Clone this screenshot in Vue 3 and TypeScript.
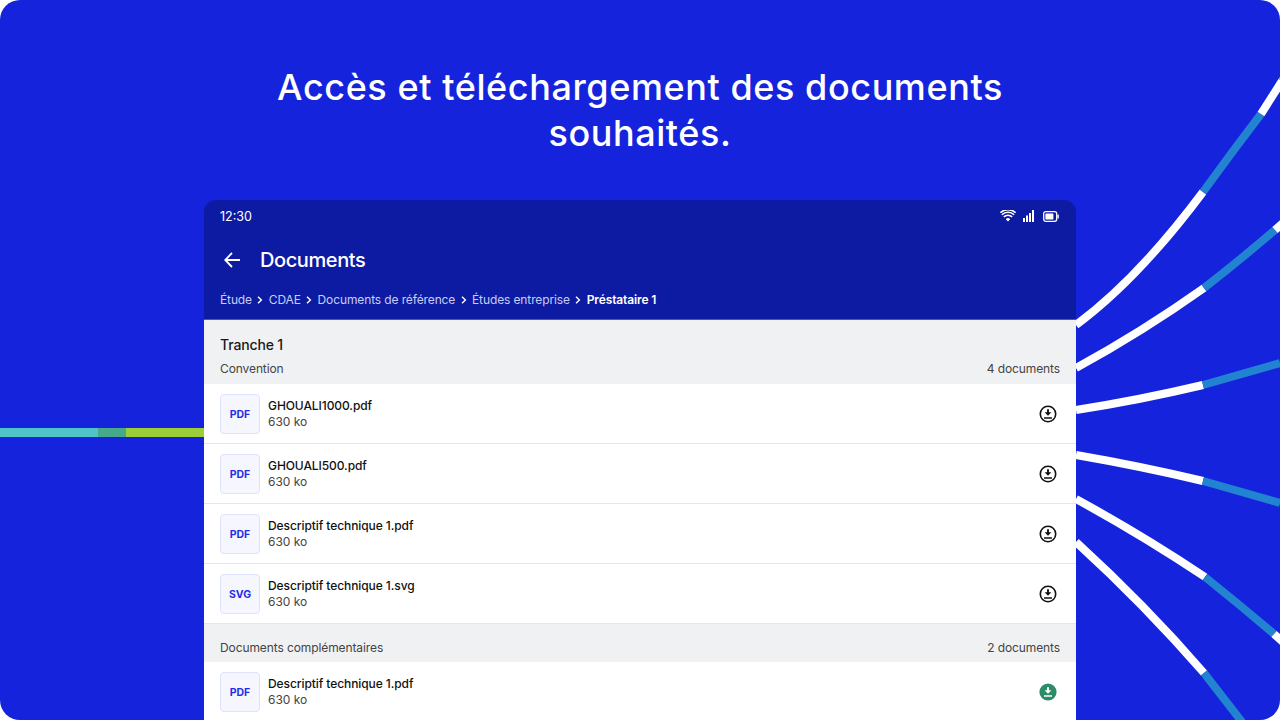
<template>
  <div class="stage">
    <svg class="rays" width="1280" height="720" viewBox="0 0 1280 720" aria-hidden="true">
      <rect x="0" y="428" width="98" height="9" fill="#4fc3c8" />
      <rect x="98" y="428" width="28" height="9" fill="#46a98a" />
      <rect x="126" y="428" width="78" height="9" fill="#9bcf38" />
      <g v-for="ray in rays" :key="ray.white" fill="none" stroke-width="8">
        <path :d="ray.white" stroke="#ffffff" />
        <path :d="ray.blue" stroke="#2283d0" />
        <path v-if="ray.tip" :d="ray.tip" stroke="#ffffff" />
      </g>
      <path d="M1282 81 1292 64" fill="none" stroke="#f5a623" stroke-width="8" />
    </svg>

    <h1 class="title">Accès et téléchargement des documents<br />souhaités.</h1>

    <section class="phone">
      <header class="appbar">
        <div class="status">
          <span>12:30</span>
          <div class="status-icons">
            <svg width="16" height="12" viewBox="0 0 16 12">
              <path d="M8 11.6 5.8 9.2a3.1 3.1 0 0 1 4.4 0Z" fill="#fff" />
              <path d="M3.8 6.9a5.9 5.9 0 0 1 8.4 0M1.9 4.7a8.6 8.6 0 0 1 12.2 0M.4 2.7a11 11 0 0 1 15.2 0" fill="none" stroke="#fff" stroke-width="1.5" />
            </svg>
            <svg width="11" height="12" viewBox="0 0 11 12" fill="#fff">
              <rect x="0" y="8" width="2" height="4" />
              <rect x="3" y="5.5" width="2" height="6.5" />
              <rect x="6" y="3" width="2" height="9" />
              <rect x="9" y="0" width="2" height="12" />
            </svg>
            <svg class="battery" width="16" height="11" viewBox="0 0 16 11">
              <rect x=".7" y=".7" width="13" height="9.6" rx="2" fill="none" stroke="#fff" stroke-width="1.3" />
              <rect x="2.4" y="2.4" width="8" height="6.2" rx=".6" fill="#fff" />
              <rect x="14.4" y="3.6" width="1.4" height="3.8" rx=".5" fill="#fff" />
            </svg>
          </div>
        </div>
        <div class="toolbar">
          <svg class="back" width="16" height="16" viewBox="0 0 16 16" fill="none" stroke="#fff" stroke-width="1.8">
            <path d="M16 8H1.5M8 1 1.2 8 8 15" />
          </svg>
          <h2>Documents</h2>
        </div>
        <nav class="crumbs">
          <template v-for="(crumb, i) in crumbs" :key="crumb">
            <svg v-if="i > 0" width="6" height="8" viewBox="0 0 6 8" fill="none" stroke="#fff" stroke-width="1.4">
              <path d="M1 .8 4.4 4 1 7.2" />
            </svg>
            <span :class="{ current: i === crumbs.length - 1 }">{{ crumb }}</span>
          </template>
        </nav>
      </header>

      <div v-for="(group, g) in groups" :key="group.label">
        <div class="group-head" :class="{ first: g === 0 }">
          <h3 v-if="group.heading">{{ group.heading }}</h3>
          <div class="group-meta">
            <span>{{ group.label }}</span>
            <span>{{ group.files.length + group.hidden }} documents</span>
          </div>
        </div>
        <div v-for="file in group.files" :key="file.name + file.ext" class="row">
          <div class="tile">{{ file.ext }}</div>
          <div class="info">
            <strong>{{ file.name }}</strong>
            <span>630 ko</span>
          </div>
          <svg v-if="file.done" width="18" height="18" viewBox="0 0 18 18">
            <circle cx="9" cy="9" r="8.6" fill="#2e8b68" />
            <path d="M9 4.2v3.8" fill="none" stroke="#fff" stroke-width="1.9" />
            <path d="M5.6 7.2h6.8L9 10.7Z" fill="#fff" />
            <path d="M5 13h8" fill="none" stroke="#fff" stroke-width="1.5" />
          </svg>
          <svg v-else width="18" height="18" viewBox="0 0 18 18">
            <circle cx="9" cy="9" r="7.7" fill="none" stroke="#111" stroke-width="1.6" />
            <path d="M9 4.2v3.8" fill="none" stroke="#111" stroke-width="1.9" />
            <path d="M5.6 7.2h6.8L9 10.7Z" fill="#111" />
            <path d="M5 13h8" fill="none" stroke="#111" stroke-width="1.5" />
          </svg>
        </div>
      </div>
    </section>
  </div>
</template>

<script setup lang="ts">
interface DocFile {
  name: string;
  ext: string;
  done?: boolean;
}

const crumbs = ['Étude', 'CDAE', 'Documents de référence', 'Études entreprise', 'Préstataire 1'];

const rays = [
  { white: 'M1076 325Q1138 279 1203 192', blue: 'M1203 192Q1232 152 1261 114', tip: 'M1261 114L1282 81' },
  { white: 'M1076 368Q1142 332 1204 288', blue: 'M1204 288Q1240 260 1275 230', tip: 'M1275 230L1284 222' },
  { white: 'M1076 410Q1140 400 1203 385', blue: 'M1203 385L1280 363' },
  { white: 'M1076 455Q1140 466 1203 481', blue: 'M1203 481L1280 503' },
  { white: 'M1076 499Q1142 535 1205 577', blue: 'M1205 577Q1240 605 1274 634', tip: 'M1274 634L1284 643' },
  { white: 'M1076 542Q1145 605 1204 673', blue: 'M1204 673L1242 722' },
];

const groups: { heading?: string; label: string; hidden: number; files: DocFile[] }[] = [
  {
    heading: 'Tranche 1',
    label: 'Convention',
    hidden: 0,
    files: [
      { name: 'GHOUALI1000.pdf', ext: 'PDF' },
      { name: 'GHOUALI500.pdf', ext: 'PDF' },
      { name: 'Descriptif technique 1.pdf', ext: 'PDF' },
      { name: 'Descriptif technique 1.svg', ext: 'SVG' },
    ],
  },
  {
    label: 'Documents complémentaires',
    hidden: 1,
    files: [{ name: 'Descriptif technique 1.pdf', ext: 'PDF', done: true }],
  },
];
</script>

<style>
html,
body {
  background: #ffffff;
}
</style>

<style scoped>
.stage {
  position: relative;
  width: 1280px;
  height: 720px;
  overflow: hidden;
  border-radius: 20px;
  background: #1524dc;
  font-family: Inter, "Liberation Sans", sans-serif;
  display: flex;
  flex-direction: column;
  align-items: center;
}

.rays {
  position: absolute;
  top: 0;
  left: 0;
}

.title {
  margin: 64px 0 44px;
  color: #ffffff;
  font-size: 36px;
  line-height: 46px;
  font-weight: 500;
  letter-spacing: 0.58px;
  text-align: center;
}

.phone {
  position: relative;
  flex: none;
  width: 872px;
  border-radius: 12px 12px 0 0;
  overflow: hidden;
}

.appbar {
  background: #0d1ba3;
  border-bottom: 1px solid #4452dc;
  color: #ffffff;
  height: 120px;
  box-sizing: border-box;
}

.status {
  height: 32px;
  padding: 0 17px 0 16px;
  display: flex;
  align-items: center;
  justify-content: space-between;
  font-size: 12.5px;
}

.status-icons {
  display: flex;
  align-items: center;
  gap: 7px;
}

.battery {
  margin-left: 2px;
}

.toolbar {
  height: 56px;
  padding: 0 20px;
  display: flex;
  align-items: center;
  gap: 20px;
}

.toolbar h2 {
  margin: 0;
  font-size: 20px;
  font-weight: 500;
  letter-spacing: -0.4px;
}

.crumbs {
  height: 23px;
  padding: 0 16px;
  display: flex;
  align-items: center;
  gap: 5.4px;
  font-size: 12px;
  letter-spacing: -0.12px;
  color: #c9cdf3;
}

.crumbs .current {
  color: #ffffff;
  font-weight: 600;
}

.group-head {
  background: #f0f1f3;
  padding: 16px 16px 7px;
  color: #444444;
  font-size: 12px;
  letter-spacing: -0.1px;
}

.group-head.first {
  padding-bottom: 8px;
}

.group-head h3 {
  margin: 0 0 7px;
  color: #1a1a1a;
  font-size: 14px;
  line-height: 18px;
  font-weight: 500;
  letter-spacing: -0.15px;
}

.group-meta {
  display: flex;
  justify-content: space-between;
  line-height: 15px;
}

.row {
  height: 60px;
  box-sizing: border-box;
  padding: 0 19px 0 16px;
  display: flex;
  align-items: center;
  gap: 8px;
  background: #ffffff;
  border-bottom: 1px solid #e6e7ea;
}

.tile {
  width: 40px;
  height: 40px;
  box-sizing: border-box;
  padding-top: 1px;
  border: 1px solid #dfe2fb;
  border-radius: 4px;
  background: #f5f6fe;
  color: #1f2ee6;
  font-size: 10.5px;
  font-weight: 700;
  display: flex;
  align-items: center;
  justify-content: center;
}

.info {
  flex: 1;
  display: flex;
  flex-direction: column;
  font-size: 12px;
  line-height: 16px;
  color: #444444;
}

.info strong {
  color: #111111;
  font-weight: 500;
  letter-spacing: -0.08px;
}
</style>
